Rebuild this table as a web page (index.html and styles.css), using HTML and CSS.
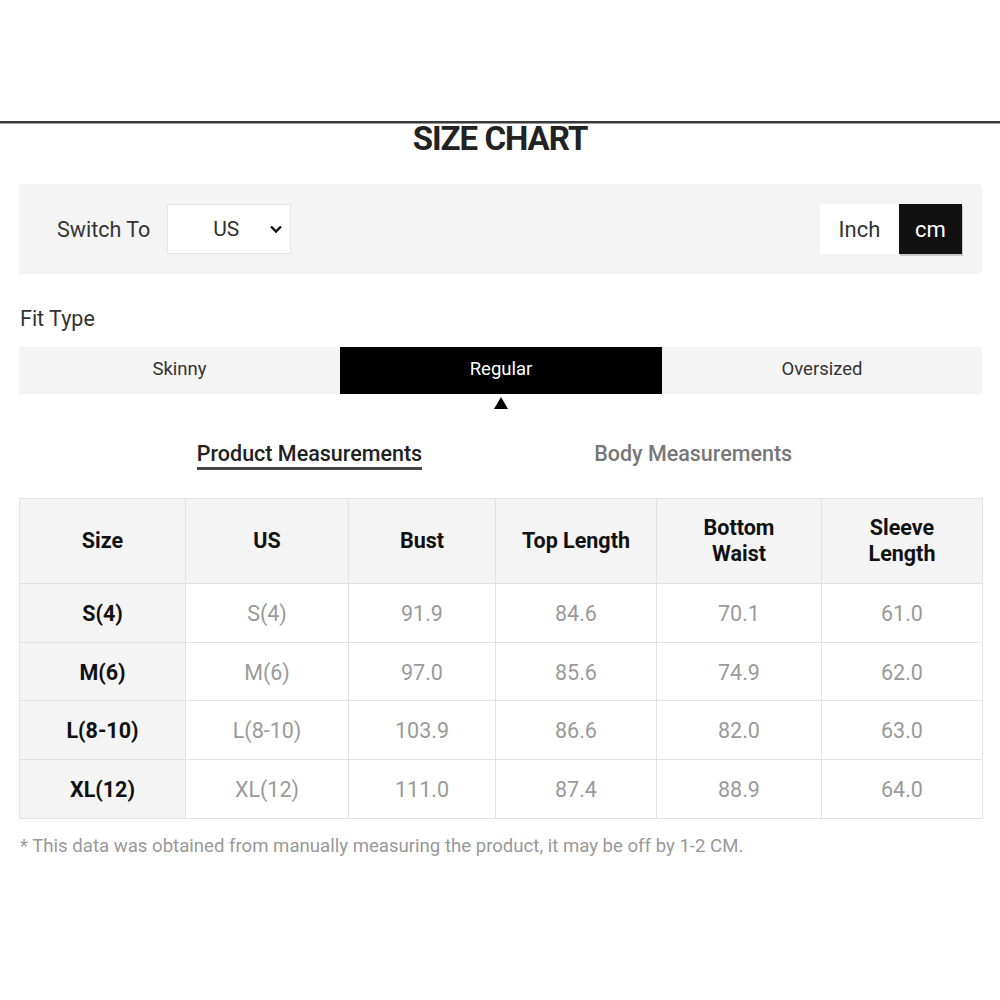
FILE: index.html
```html
<!DOCTYPE html>
<html>
<head>
<meta charset="utf-8">
<link rel="stylesheet" href="styles.css">
</head>
<body>
<div class="topspace"></div>
<div class="rule"></div>
<h1 class="title">SIZE CHART</h1>
<main class="content">
  <section class="panel">
    <div class="switch">
      <span class="switch-label">Switch To</span>
      <div class="select">
        <span class="select-value">US</span>
        <svg class="chev" width="14" height="10" viewBox="0 0 14 10"><path d="M2 2.5 L7 7.5 L12 2.5" fill="none" stroke="#111" stroke-width="2.4"/></svg>
      </div>
    </div>
    <div class="units">
      <span class="unit">Inch</span>
      <span class="unit unit-active">cm</span>
    </div>
  </section>

  <div class="fit-label">Fit Type</div>
  <div class="fit-tabs">
    <div class="fit-tab">Skinny</div>
    <div class="fit-tab fit-active">Regular</div>
    <div class="fit-tab">Oversized</div>
  </div>

  <div class="meas-tabs">
    <span class="meas meas-active">Product Measurements</span>
    <span class="meas">Body Measurements</span>
  </div>

  <table class="chart">
    <colgroup>
      <col class="c1"><col class="c2"><col class="c3"><col class="c4"><col class="c5"><col class="c6">
    </colgroup>
    <thead>
      <tr><th>Size</th><th>US</th><th>Bust</th><th>Top Length</th><th>Bottom<br>Waist</th><th>Sleeve<br>Length</th></tr>
    </thead>
    <tbody>
      <tr><th>S(4)</th><td>S(4)</td><td>91.9</td><td>84.6</td><td>70.1</td><td>61.0</td></tr>
      <tr><th>M(6)</th><td>M(6)</td><td>97.0</td><td>85.6</td><td>74.9</td><td>62.0</td></tr>
      <tr><th>L(8-10)</th><td>L(8-10)</td><td>103.9</td><td>86.6</td><td>82.0</td><td>63.0</td></tr>
      <tr><th>XL(12)</th><td>XL(12)</td><td>111.0</td><td>87.4</td><td>88.9</td><td>64.0</td></tr>
    </tbody>
  </table>

  <p class="note">* This data was obtained from manually measuring the product, it may be off by 1-2 CM.</p>
</main>
</body>
</html>
```
FILE: styles.css
```css
* { box-sizing: border-box; }
body {
  margin: 0;
  font-family: Roboto, "Liberation Sans", sans-serif;
  color: #333;
  background: #fff;
}
.topspace { height: 121px; }
.rule {
  height: 3px;
  border-top: 2px solid #3a3a3a;
  border-bottom: 1px solid #9a9a9a;
}
.title {
  margin: 0;
  text-align: center;
  font-size: 33px;
  line-height: 30px;
  font-weight: 700;
  letter-spacing: -1px;
  color: #222;
}
.content {
  width: 963px;
  margin-left: 19px;
}
.panel {
  margin-top: 30px;
  height: 90px;
  background: #f4f4f4;
  border-radius: 0 4px 4px 0;
  display: flex;
  align-items: center;
  justify-content: space-between;
  padding: 0 20px 0 38px;
}
.switch { display: flex; align-items: center; gap: 17px; }
.switch-label { font-size: 21.5px; color: #333; }
.select {
  width: 124px;
  height: 50px;
  background: #fff;
  border: 1px solid #e6e6e6;
  display: flex;
  align-items: center;
  padding-left: 45px;
  padding-right: 7px;
}
.select-value { font-size: 21px; color: #333; flex: 1; }
.chev { display: block; }
.units { display: flex; }
.unit {
  height: 50px;
  display: flex;
  align-items: center;
  justify-content: center;
  font-size: 22px;
  background: #fff;
  color: #333;
  width: 79px;
}
.unit-active {
  width: 63px;
  background: #111;
  color: #fff;
  box-shadow: 1px 2px 0 #c8c8c8;
}
.fit-label {
  margin-top: 32px;
  margin-left: 1px;
  font-size: 21.5px;
  line-height: 26px;
  color: #333;
}
.fit-tabs {
  margin-top: 15px;
  display: grid;
  grid-template-columns: 321px 322px 320px;
  height: 47px;
  background: #f4f4f4;
}
.fit-tab {
  display: flex;
  align-items: center;
  justify-content: center;
  font-size: 18.5px;
  color: #333;
  padding-bottom: 4px;
}
.fit-active {
  background: #000;
  color: #fff;
  position: relative;
}
.fit-active::after {
  content: "";
  position: absolute;
  left: 50%;
  top: 50px;
  margin-left: -7px;
  border-left: 7px solid transparent;
  border-right: 7px solid transparent;
  border-bottom: 12px solid #000;
}
.meas-tabs {
  margin-top: 47px;
  display: flex;
  justify-content: center;
  gap: 172px;
  padding-right: 12px;
}
.meas {
  font-size: 21.5px;
  line-height: 26px;
  font-weight: 500;
  color: #777;
}
.meas-active {
  color: #222;
  border-bottom: 3px solid #444;
}
.chart {
  margin-top: 28px;
  width: 963px;
  border-collapse: collapse;
  table-layout: fixed;
}
.c1 { width: 166px; }
.c2 { width: 163px; }
.c3 { width: 147px; }
.c4 { width: 161px; }
.c5 { width: 165px; }
.c6 { width: 161px; }
.chart th, .chart td {
  border: 1px solid #e2e2e2;
  text-align: center;
  font-size: 21.5px;
  line-height: 26px;
  padding: 0;
}
.chart thead th {
  height: 85px;
  background: #f4f4f4;
  font-weight: 700;
  color: #111;
}
.chart tbody th {
  height: 58.7px;
  background: #f4f4f4;
  font-weight: 700;
  color: #111;
  padding-top: 2px;
}
.chart td {
  height: 58.7px;
  color: #9a9a9a;
  font-weight: 400;
  padding-top: 2px;
}
.note {
  margin: 15px 0 0 1px;
  font-size: 18.6px;
  line-height: 24px;
  color: #999;
}
```
